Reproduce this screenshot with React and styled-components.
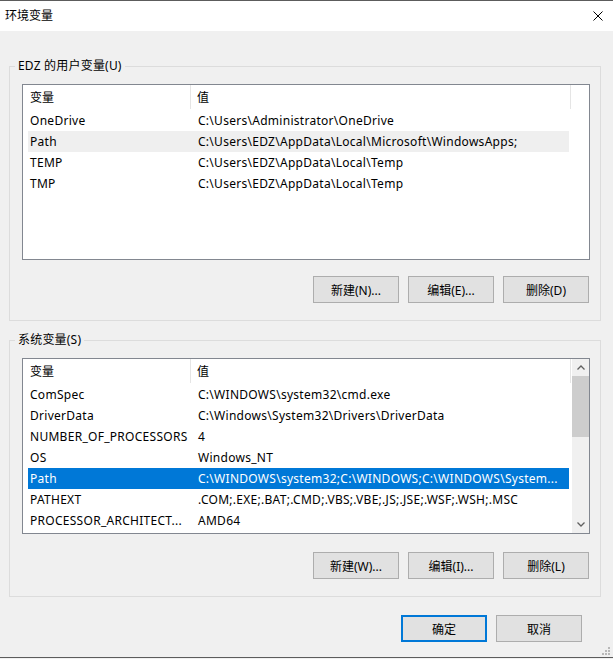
import styled, { createGlobalStyle } from "styled-components";

const GlobalStyle = createGlobalStyle`
  html, body {
    margin: 0;
    padding: 0;
    background: #f0f0f0;
  }
  body {
    font-family: "Noto Sans", "Noto Sans CJK SC", sans-serif;
    font-size: 12px;
    color: #000;
  }
`;

const Window = styled.div`
  position: relative;
  width: 613px;
  height: 658px;
  box-sizing: border-box;
  border-top: 1px solid #5c5c5c;
  border-bottom: 1px solid #5c5c5c;
  background: #f0f0f0;
  display: flex;
  flex-direction: column;
  overflow: hidden;

  &::before {
    content: "";
    position: absolute;
    top: -1px;
    left: 518px;
    width: 62px;
    height: 1px;
    background: #7b3a36;
  }
`;

const TitleBar = styled.div`
  height: 30px;
  flex: none;
  background: #fff;
  display: flex;
  align-items: center;
  justify-content: space-between;
  padding: 0 10px 0 5px;
`;

const Title = styled.span`
  font-size: 12px;
  line-height: 16px;
`;

const CloseIcon = styled.svg`
  width: 10px;
  height: 10px;
  display: block;
`;

const Body = styled.div`
  flex: 1;
  display: flex;
  flex-direction: column;
  padding: 27px 12px 0 9px;
`;

const Group = styled.fieldset`
  margin: ${(p) => p.$top}px 0 0;
  padding: 10px 10px 17px 12px;
  border: 1px solid #dcdcdc;
  min-width: 0;
  display: flex;
  flex-direction: column;
`;

const Legend = styled.legend`
  padding: 0 3px;
  margin-left: -7px;
  line-height: 16px;
  font-size: 12px;
  letter-spacing: 0.2px;
`;

const List = styled.div`
  height: 176px;
  box-sizing: border-box;
  border: 1px solid #828790;
  background: #fff;
  display: flex;
  overflow: hidden;
`;

const ListMain = styled.div`
  width: 548px;
  flex: none;
  display: flex;
  flex-direction: column;
`;

const Header = styled.div`
  height: 25px;
  display: flex;
  flex: none;
`;

const HeaderCell = styled.div`
  box-sizing: border-box;
  height: 24px;
  display: flex;
  align-items: center;
  border-right: 1px solid #e5e5e5;
  padding-left: ${(p) => p.$pad}px;
  width: ${(p) => p.$w}px;
  flex: ${(p) => (p.$w ? "none" : 1)};
`;

const Row = styled.div`
  height: 21px;
  margin-left: 5px;
  width: 541px;
  display: flex;
  align-items: center;
  letter-spacing: 0.28px;
  background: ${(p) =>
    p.$sel === "active" ? "#0078d7" : p.$sel === "inactive" ? "#efefef" : "transparent"};
  color: ${(p) => (p.$sel === "active" ? "#fff" : "#000")};
`;

const NameCell = styled.div`
  width: 163px;
  flex: none;
  box-sizing: border-box;
  padding: 0 0 0 2px;
  white-space: nowrap;
  overflow: hidden;
  text-overflow: ellipsis;
`;

const ValueCell = styled.div`
  flex: 1;
  min-width: 0;
  padding: 0 9px 0 7px;
  white-space: nowrap;
  overflow: hidden;
  text-overflow: ellipsis;
`;

const Scrollbar = styled.div`
  width: 17px;
  margin-left: auto;
  flex: none;
  background: #f0f0f0;
  display: flex;
  flex-direction: column;
`;

const ArrowBtn = styled.div`
  height: 17px;
  flex: none;
  display: flex;
  align-items: center;
  justify-content: center;
`;

const Track = styled.div`
  flex: 1;
`;

const Thumb = styled.div`
  height: 61px;
  background: #cdcdcd;
`;

const ButtonRow = styled.div`
  display: flex;
  justify-content: flex-end;
  gap: 9px;
  margin-top: ${(p) => p.$gap}px;
  padding-right: ${(p) => p.$right || 0}px;
`;

const Button = styled.button`
  width: ${(p) => p.$w || 86}px;
  height: 27px;
  box-sizing: border-box;
  padding: 0;
  background: #e1e1e1;
  border: ${(p) => (p.$primary ? "2px solid #0078d7" : "1px solid #adadad")};
  font-family: inherit;
  font-size: 12px;
  color: #000;
`;

const Grip = styled.svg`
  position: absolute;
  right: 3px;
  bottom: 2px;
  width: 8px;
  height: 8px;
`;

function Chevron({ up }) {
  return (
    <svg width="8" height="5" viewBox="0 0 8 5">
      <polyline
        points={up ? "0.5,4.5 4,1 7.5,4.5" : "0.5,0.5 4,4 7.5,0.5"}
        fill="none"
        stroke="#606060"
        strokeWidth="1.3"
      />
    </svg>
  );
}

function VarList({ rows, scroll }) {
  return (
    <List>
      <ListMain>
        <Header>
          <HeaderCell $w={168} $pad={7}>变量</HeaderCell>
          <HeaderCell $pad={6}>值</HeaderCell>
        </Header>
        {rows.map((r) => (
          <Row key={r[0]} $sel={r[2]}>
            <NameCell>{r[0]}</NameCell>
            <ValueCell>{r[1]}</ValueCell>
          </Row>
        ))}
      </ListMain>
      {scroll && (
        <Scrollbar>
          <ArrowBtn>
            <Chevron up />
          </ArrowBtn>
          <Track>
            <Thumb />
          </Track>
          <ArrowBtn>
            <Chevron />
          </ArrowBtn>
        </Scrollbar>
      )}
    </List>
  );
}

const userVars = [
  ["OneDrive", "C:\\Users\\Administrator\\OneDrive"],
  ["Path", "C:\\Users\\EDZ\\AppData\\Local\\Microsoft\\WindowsApps;", "inactive"],
  ["TEMP", "C:\\Users\\EDZ\\AppData\\Local\\Temp"],
  ["TMP", "C:\\Users\\EDZ\\AppData\\Local\\Temp"],
];

const systemVars = [
  ["ComSpec", "C:\\WINDOWS\\system32\\cmd.exe"],
  ["DriverData", "C:\\Windows\\System32\\Drivers\\DriverData"],
  ["NUMBER_OF_PROCESSORS", "4"],
  ["OS", "Windows_NT"],
  ["Path", "C:\\WINDOWS\\system32;C:\\WINDOWS;C:\\WINDOWS\\System...", "active"],
  ["PATHEXT", ".COM;.EXE;.BAT;.CMD;.VBS;.VBE;.JS;.JSE;.WSF;.WSH;.MSC"],
  ["PROCESSOR_ARCHITECT...", "AMD64"],
];

export default function App() {
  return (
    <>
      <GlobalStyle />
      <Window>
        <TitleBar>
          <Title>环境变量</Title>
          <CloseIcon viewBox="0 0 10 10">
            <path d="M0.5 0.5 L9.5 9.5 M9.5 0.5 L0.5 9.5" stroke="#000" strokeWidth="1" />
          </CloseIcon>
        </TitleBar>
        <Body>
          <Group $top={0}>
            <Legend>EDZ 的用户变量(U)</Legend>
            <VarList rows={userVars} />
            <ButtonRow $gap={16} $right={1}>
              <Button>新建(N)...</Button>
              <Button>编辑(E)...</Button>
              <Button>删除(D)</Button>
            </ButtonRow>
          </Group>
          <Group $top={11}>
            <Legend>系统变量(S)</Legend>
            <VarList rows={systemVars} scroll />
            <ButtonRow $gap={18} $right={1}>
              <Button>新建(W)...</Button>
              <Button>编辑(I)...</Button>
              <Button>删除(L)</Button>
            </ButtonRow>
          </Group>
          <ButtonRow $gap={18} $right={19}>
            <Button $primary>确定</Button>
            <Button>取消</Button>
          </ButtonRow>
        </Body>
        <Grip viewBox="0 0 8 8">
          {[
            [6, 0],
            [3, 3],
            [6, 3],
            [0, 6],
            [3, 6],
            [6, 6],
          ].map(([x, y]) => (
            <rect key={`${x}-${y}`} x={x} y={y} width="2" height="2" fill="#b8b8b8" />
          ))}
        </Grip>
      </Window>
    </>
  );
}
